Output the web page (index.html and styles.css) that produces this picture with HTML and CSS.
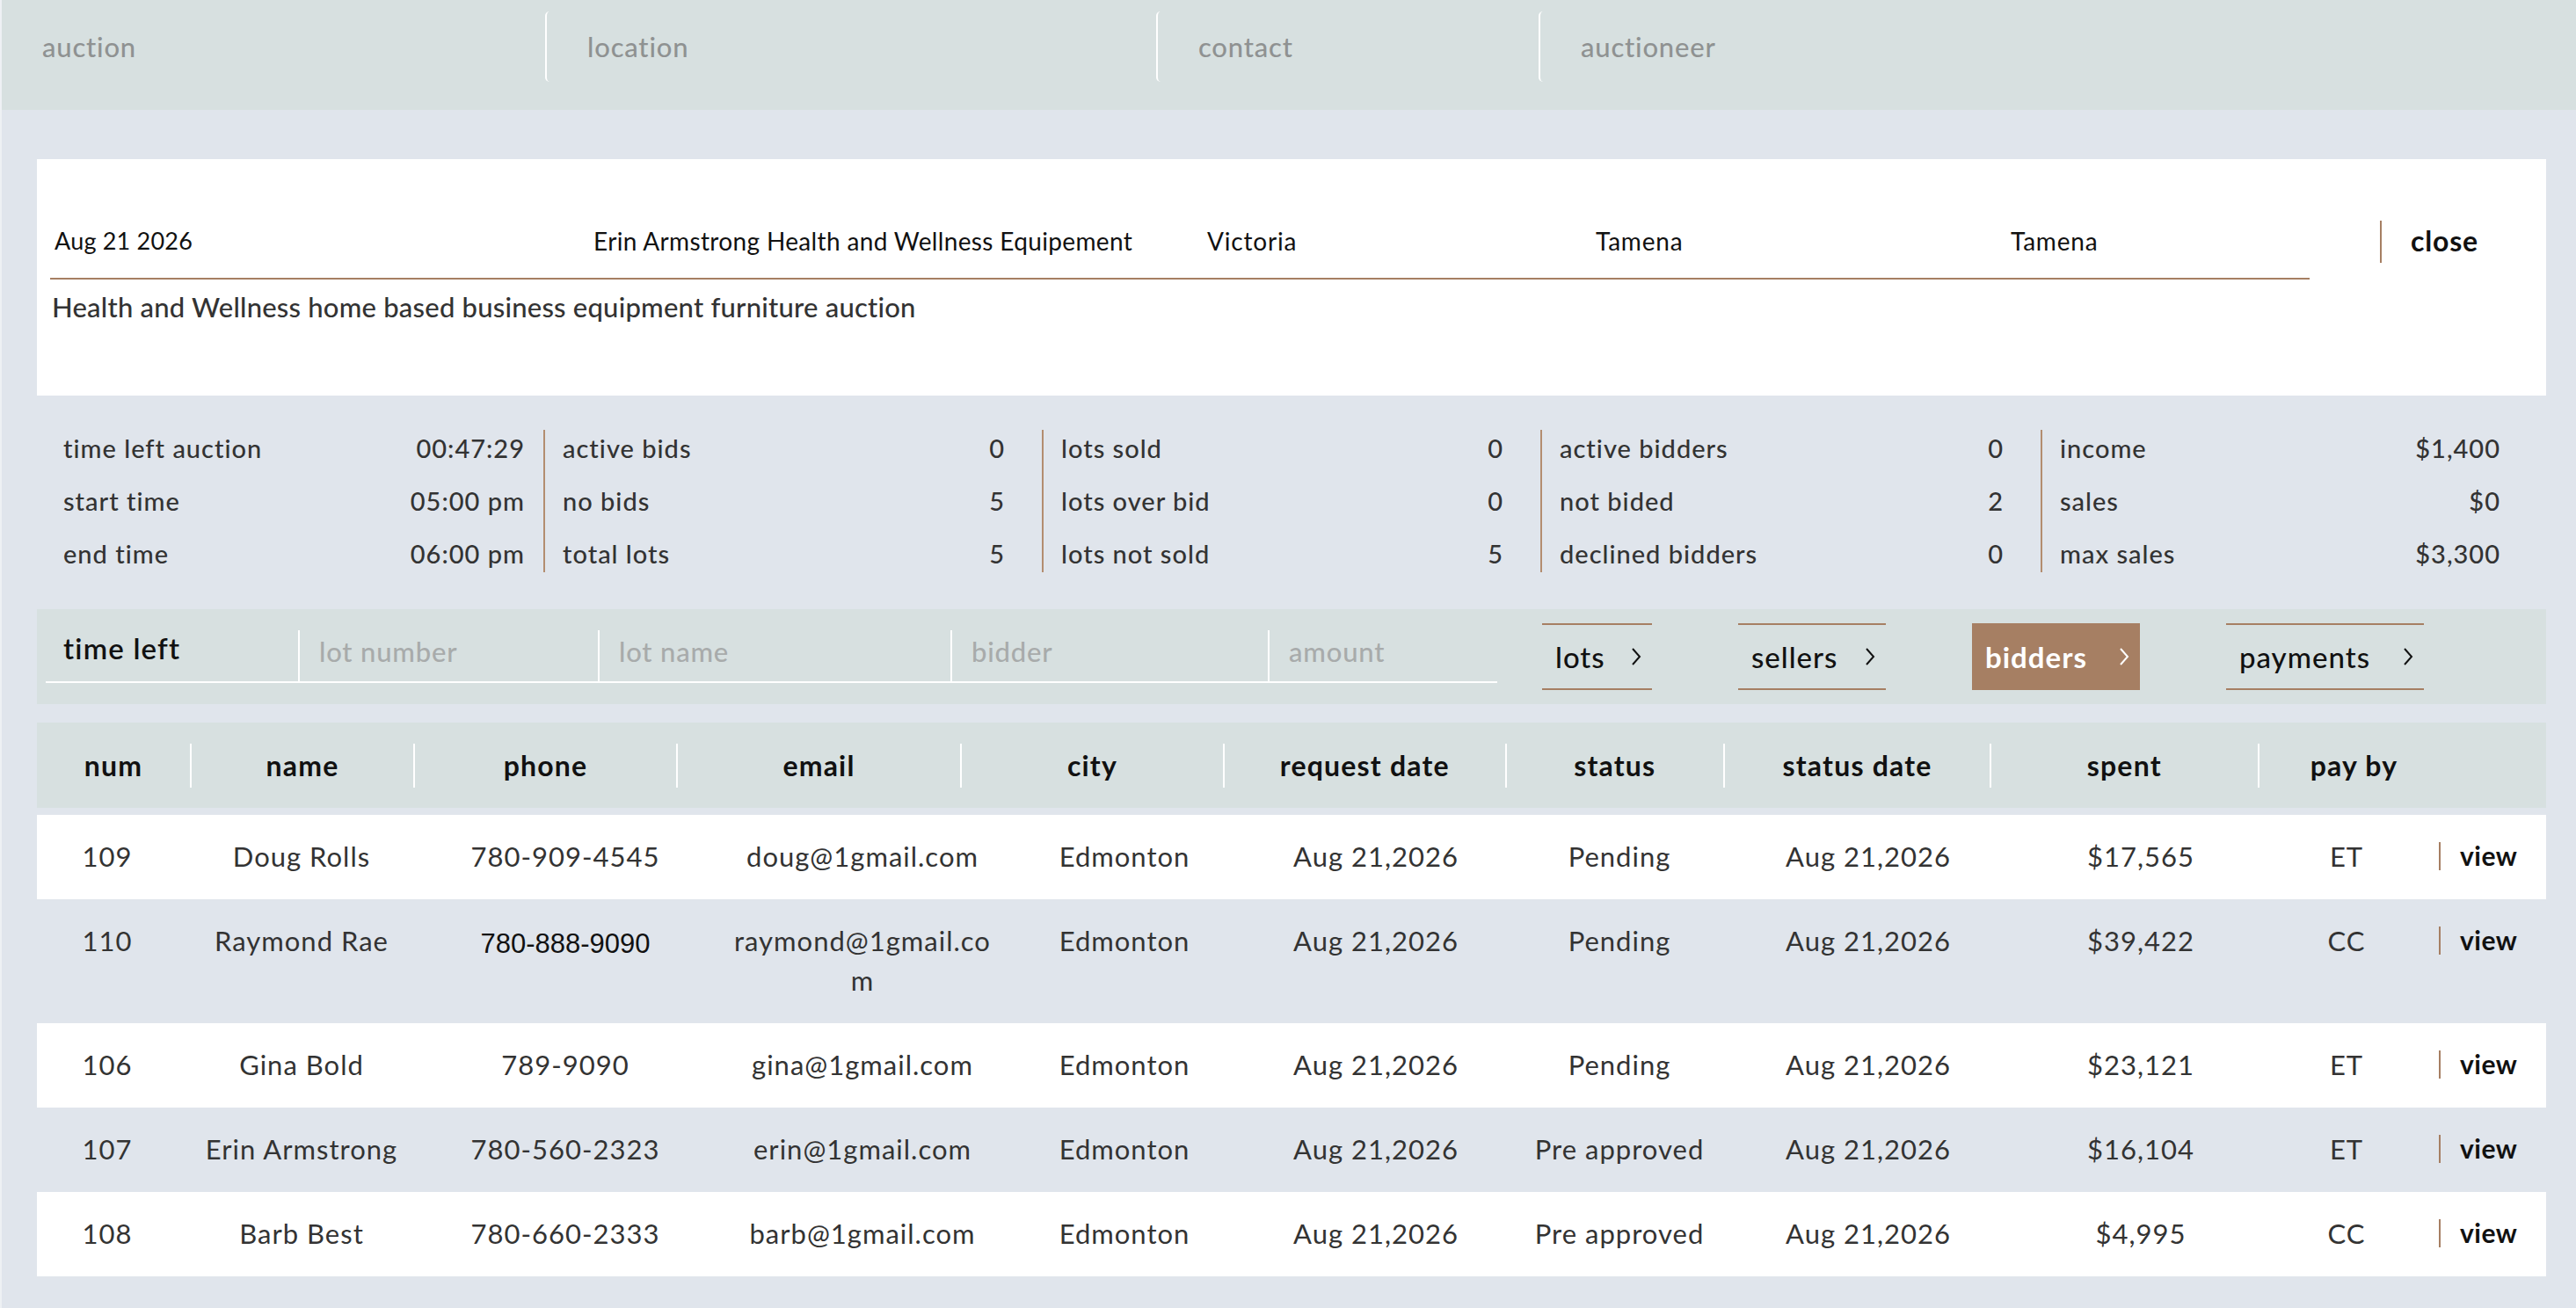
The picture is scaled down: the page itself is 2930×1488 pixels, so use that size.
FILE: index.html
```html
<!DOCTYPE html>
<html lang="en">
<head>
<meta charset="utf-8">
<title>Auction bidders</title>
<link rel="stylesheet" href="styles.css">
</head>
<body>
<header class="topbar">
  <div class="tcell c1">auction</div>
  <div class="tcell c2">location</div>
  <div class="tcell c3">contact</div>
  <div class="tcell c4">auctioneer</div>
</header>
<main class="page">
  <section class="card">
    <div class="card-top">
      <div class="info-row">
        <span class="info i1">Aug 21 2026</span>
        <span class="info i2">Erin Armstrong Health and Wellness Equipement</span>
        <span class="info i3">Victoria</span>
        <span class="info i4">Tamena</span>
        <span class="info i5">Tamena</span>
      </div>
      <div class="close">close</div>
    </div>
    <p class="desc">Health and Wellness home based business equipment furniture auction</p>
  </section>

  <section class="stats">
    <div class="scol">
      <div class="srow"><span>time left auction</span><span>00:47:29</span></div>
      <div class="srow"><span>start time</span><span>05:00 pm</span></div>
      <div class="srow"><span>end time</span><span>06:00 pm</span></div>
    </div>
    <div class="scol">
      <div class="srow"><span>active bids</span><span>0</span></div>
      <div class="srow"><span>no bids</span><span>5</span></div>
      <div class="srow"><span>total lots</span><span>5</span></div>
    </div>
    <div class="scol">
      <div class="srow"><span>lots sold</span><span>0</span></div>
      <div class="srow"><span>lots over bid</span><span>0</span></div>
      <div class="srow"><span>lots not sold</span><span>5</span></div>
    </div>
    <div class="scol">
      <div class="srow"><span>active bidders</span><span>0</span></div>
      <div class="srow"><span>not bided</span><span>2</span></div>
      <div class="srow"><span>declined bidders</span><span>0</span></div>
    </div>
    <div class="scol">
      <div class="srow"><span>income</span><span>$1,400</span></div>
      <div class="srow"><span>sales</span><span>$0</span></div>
      <div class="srow"><span>max sales</span><span>$3,300</span></div>
    </div>
  </section>

  <section class="toolbar">
    <div class="fields">
      <div class="field f1">time left</div>
      <div class="field f2">lot number</div>
      <div class="field f3">lot name</div>
      <div class="field f4">bidder</div>
      <div class="field f5">amount</div>
    </div>
    <nav class="tabs">
      <a class="tab t-lots">lots <svg class="chev" viewBox="0 0 16 24"><polyline points="4,3 12,12 4,21"/></svg></a>
      <a class="tab t-sellers">sellers <svg class="chev" viewBox="0 0 16 24"><polyline points="4,3 12,12 4,21"/></svg></a>
      <a class="tab t-bidders active">bidders <svg class="chev" viewBox="0 0 16 24"><polyline points="4,3 12,12 4,21"/></svg></a>
      <a class="tab t-payments">payments <svg class="chev" viewBox="0 0 16 24"><polyline points="4,3 12,12 4,21"/></svg></a>
    </nav>
  </section>

  <section class="table">
    <div class="thead">
      <div class="th">num</div>
      <div class="th">name</div>
      <div class="th">phone</div>
      <div class="th">email</div>
      <div class="th">city</div>
      <div class="th">request date</div>
      <div class="th">status</div>
      <div class="th">status date</div>
      <div class="th">spent</div>
      <div class="th">pay by</div>
      <div class="th empty"></div>
    </div>
    <div class="tbody">
      <div class="trow">
        <div class="td">109</div><div class="td">Doug Rolls</div><div class="td">780-909-4545</div><div class="td email">doug@1gmail.com</div><div class="td">Edmonton</div><div class="td">Aug 21,2026</div><div class="td">Pending</div><div class="td">Aug 21,2026</div><div class="td">$17,565</div><div class="td">ET</div><div class="td view"><span>view</span></div>
      </div>
      <div class="trow">
        <div class="td">110</div><div class="td">Raymond Rae</div><div class="td alt">780-888-9090</div><div class="td email">raymond@1gmail.com</div><div class="td">Edmonton</div><div class="td">Aug 21,2026</div><div class="td">Pending</div><div class="td">Aug 21,2026</div><div class="td">$39,422</div><div class="td">CC</div><div class="td view"><span>view</span></div>
      </div>
      <div class="trow">
        <div class="td">106</div><div class="td">Gina Bold</div><div class="td">789-9090</div><div class="td email">gina@1gmail.com</div><div class="td">Edmonton</div><div class="td">Aug 21,2026</div><div class="td">Pending</div><div class="td">Aug 21,2026</div><div class="td">$23,121</div><div class="td">ET</div><div class="td view"><span>view</span></div>
      </div>
      <div class="trow">
        <div class="td">107</div><div class="td">Erin Armstrong</div><div class="td">780-560-2323</div><div class="td email">erin@1gmail.com</div><div class="td">Edmonton</div><div class="td">Aug 21,2026</div><div class="td">Pre approved</div><div class="td">Aug 21,2026</div><div class="td">$16,104</div><div class="td">ET</div><div class="td view"><span>view</span></div>
      </div>
      <div class="trow">
        <div class="td">108</div><div class="td">Barb Best</div><div class="td">780-660-2333</div><div class="td email">barb@1gmail.com</div><div class="td">Edmonton</div><div class="td">Aug 21,2026</div><div class="td">Pre approved</div><div class="td">Aug 21,2026</div><div class="td">$4,995</div><div class="td">CC</div><div class="td view"><span>view</span></div>
      </div>
    </div>
  </section>
</main>
</body>
</html>
```
FILE: styles.css
```css
* { box-sizing: border-box; }
html, body { margin: 0; padding: 0; }
body {
  background: #e0e5ec;
  font-family: Lato, "Noto Sans", sans-serif;
  color: #333;
  border-left: 2px solid #eef1f4;
  min-height: 100vh;
  overflow: hidden;
}

/* top bar */
.topbar {
  height: 125px;
  background: #d7e0e0;
  display: flex;
  align-items: flex-start;
  gap: 43px;
  padding-top: 13px;
}
.tcell {
  height: 80px;
  display: flex;
  align-items: center;
  padding-left: 46px;
  border-left: 2px solid #ffffff;
  border-radius: 5px;
  color: #8f9292;
  font-size: 31px;
  font-weight: 500;
  letter-spacing: 0.8px;
}
.c1 { width: 575px; border-left: none; }
.c2 { width: 652px; }
.c3 { width: 392px; }
.c4 { width: 423px; }

/* page */
.page { padding: 56px 34px 0 40px; }

.card {
  background: #fff;
  height: 269px;
  padding: 70px 0 0 15px;
}
.card-top { display: flex; align-items: flex-start; }
.info-row {
  width: 2570px;
  height: 67px;
  display: flex;
  border-bottom: 2px solid #a67f63;
}
.info {
  line-height: 46px;
  font-size: 28px;
  letter-spacing: 0.8px;
  color: #111;
  white-space: nowrap;
}
.i1 { width: 618px; padding-left: 5px; letter-spacing: 0.2px; font-size: 27px; }
.i2 { width: 698px; letter-spacing: 0.35px; }
.i3 { width: 442px; }
.i4 { width: 472px; }
.i5 { flex: 1; }
.close {
  margin-left: 80px;
  height: 48px;
  border-left: 2px solid #a67f63;
  padding-left: 33px;
  font-size: 32px;
  letter-spacing: 0.8px;
  line-height: 46px;
  font-weight: 700;
  color: #111;
}
.desc {
  margin: 11px 0 0 2px;
  font-size: 31px;
  font-weight: 500;
  letter-spacing: 0.22px;
  line-height: 40px;
  color: #333;
}

/* stats */
.stats {
  margin-top: 39px;
  display: grid;
  grid-template-columns: 576px 567px 567px 569px 1fr;
}
.scol {
  height: 162px;
  display: flex;
  flex-direction: column;
  justify-content: space-between;
  border-left: 2px solid #b38d70;
  padding: 0 42px 0 20px;
}
.scol:first-child { border-left: none; padding: 0 21px 0 30px; }
.scol:last-child { padding-right: 52px; }
.srow {
  display: flex;
  justify-content: space-between;
  line-height: 42px;
  font-size: 29px;
  font-weight: 500;
  letter-spacing: 1px;
  color: #333;
}

/* toolbar */
.toolbar {
  margin-top: 42px;
  height: 108px;
  background: #d7e0e0;
  display: flex;
  align-items: flex-start;
  padding: 16px 0 0 10px;
}
.fields {
  display: flex;
  margin-top: 8px;
  border-bottom: 2px solid #fff;
}
.field {
  height: 58px;
  padding: 4px 0 0 22px;
  border-left: 2px solid #fff;
  font-size: 31px;
  font-weight: 500;
  letter-spacing: 0.8px;
  line-height: 40px;
  color: #a8abab;
  white-space: nowrap;
}
.f1 {
  width: 287px;
  border-left: none;
  padding: 0 0 0 20px;
  color: #111;
  font-size: 33px;
  font-weight: 600;
  letter-spacing: 1.2px;
}
.f2 { width: 341px; }
.f3 { width: 401px; }
.f4 { width: 361px; }
.f5 { width: 261px; }

.tabs { display: flex; gap: 98px; margin-left: 51px; }
.tab {
  height: 76px;
  display: flex;
  align-items: center;
  justify-content: space-between;
  padding: 0 10px 0 15px;
  border-top: 2px solid #a67f63;
  border-bottom: 2px solid #a67f63;
  font-size: 33px;
  font-weight: 500;
  letter-spacing: 1px;
  color: #111;
  white-space: nowrap;
}
.t-lots { width: 125px; }
.t-sellers { width: 168px; }
.t-bidders { width: 191px; }
.t-payments { width: 225px; }
.tab.active { background: #a67f63; color: #fff; font-weight: 700; }
.chev { width: 16px; height: 24px; fill: none; stroke: currentColor; stroke-width: 2; }

/* table */
.table { margin-top: 21px; }
.thead {
  height: 97px;
  background: #d7e0e0;
  display: grid;
  grid-template-columns: 174px 254px 299px 323px 299px 320.5px 248.5px 303px 304.5px 218px 1fr;
  align-items: center;
}
.th {
  text-align: center;
  font-size: 32px;
  font-weight: 700;
  letter-spacing: 1.2px;
  line-height: 50px;
  color: #111;
  border-left: 2px solid #fff;
  white-space: nowrap;
}
.th:first-child, .th.empty { border-left: none; }

.tbody { margin-top: 8px; }
.trow {
  display: grid;
  grid-template-columns: 160px 282px 318px 358px 238px 334px 220px 346px 274px 194px 130px;
  align-items: start;
  padding: 25px 0 26px;
}
.trow:nth-child(odd) { background: #fff; }
.td {
  text-align: center;
  font-size: 31px;
  letter-spacing: 1px;
  line-height: 45px;
  color: #333;
  white-space: nowrap;
}
.td.email {
  white-space: normal;
  word-break: break-all;
  padding: 0 30px;
}
.td.alt {
  font-family: "Liberation Sans", Arial, sans-serif;
  font-size: 31px;
  letter-spacing: 0;
  color: #111;
  padding-top: 3px;
}
.td.view { padding: 6px 0 0 8px; text-align: left; }
.td.view span {
  display: block;
  height: 32px;
  line-height: 30px;
  border-left: 2px solid #a67f63;
  padding-left: 22px;
  font-weight: 700;
  font-size: 30px;
  letter-spacing: 0.5px;
  color: #111;
}
```
